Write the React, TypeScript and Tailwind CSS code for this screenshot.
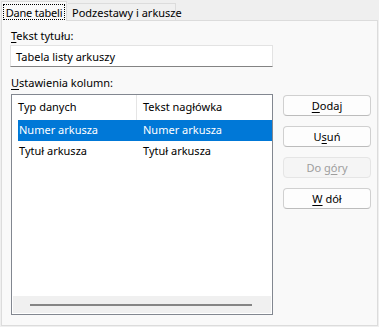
import React from "react";

function U({ children }: { children: React.ReactNode }) {
  return <span className="underline underline-offset-[2px] decoration-[1px]">{children}</span>;
}

function Btn({ children, disabled }: { children: React.ReactNode; disabled?: boolean }) {
  return (
    <div
      className={
        "h-[21px] w-[88px] rounded-[4px] border flex items-center justify-center leading-none whitespace-pre " +
        (disabled
          ? "border-[#e5e5e5] bg-[#f5f5f5] text-[#9d9d9d]"
          : "border-[#d0d0d0] border-b-[#bcbcbc] bg-[#fdfdfd] text-black")
      }
    >
      <span>{children}</span>
    </div>
  );
}

export default function App() {
  return (
    <div
      className="w-[379px] h-[327px] bg-[#efefef] overflow-hidden text-black text-[11px]"
      style={{ fontFamily: '"Noto Sans", "Segoe UI", sans-serif' }}
    >
      {/* tab strip */}
      <div className="flex items-end h-[20px] pl-[1px]">
        <div className="relative z-10 h-[20px] w-[66px] mb-[-1px] border border-b-0 border-[#dcdcdc] bg-[#f9f9f9] flex items-start pt-[2px] pl-[1px]">
          <div className="h-[16px] w-[62px] border border-dotted border-black flex items-center justify-center leading-none whitespace-nowrap tracking-[-0.2px]">
            Dane tabeli
          </div>
        </div>
        <div className="h-[17px] w-[108px] ml-[1px] border border-b-0 border-l-0 border-[#dcdcdc] bg-[#f0f0f0] flex items-center pl-[4px] leading-none whitespace-nowrap">
          Podzestawy i arkusze
        </div>
      </div>

      {/* panel */}
      <div className="ml-[1px] w-[377px] h-[306px] border border-[#dcdcdc] bg-[#f9f9f9] pl-[8px] pt-[8px]">
        <div className="h-[14px] pl-[1px] leading-[14px]">
          <U>T</U>ekst tytułu:
        </div>
        <div className="mt-[2px] w-[263px] h-[22px] border border-[#e3e3e3] border-b-[#838383] bg-white flex items-center pl-[5px] leading-none">
          Tabela listy arkuszy
        </div>
        <div className="mt-[9px] h-[14px] pl-[1px] leading-[14px]">
          <U>U</U>stawienia kolumn:
        </div>
        <div className="mt-[4px] flex">
          <div className="ml-[1px] w-[262px] h-[221px] border border-[#828790] bg-white flex flex-col">
            <div className="flex h-[25px] items-center">
              <div className="w-[125px] h-full border-r border-[#e5e5e5] flex items-center pl-[6px]">Typ danych</div>
              <div className="pl-[6px]">Tekst nagłówka</div>
            </div>
            <div className="ml-[6px] h-[21px] bg-[#0078d7] text-white flex items-center">
              <div className="w-[125px] pl-[1px]">Numer arkusza</div>
              <div>Numer arkusza</div>
            </div>
            <div className="ml-[6px] h-[21px] flex items-center">
              <div className="w-[125px] pl-[1px]">Tytuł arkusza</div>
              <div>Tytuł arkusza</div>
            </div>
            <div className="flex-1" />
            <div className="h-[17px] mx-[1px] mb-[1px] bg-[#f0f0f0] flex items-center pl-[17px]">
              <div className="w-[222px] h-[2px] bg-[#858585]" />
            </div>
          </div>
          <div className="ml-[10px] mt-[1px] flex flex-col gap-[10px]">
            <Btn>
              <U>D</U>odaj
            </Btn>
            <Btn>
              U<U>s</U>uń
            </Btn>
            <Btn disabled>
              Do g<U>ó</U>ry
            </Btn>
            <Btn>
              <U>W</U>{" "}dół
            </Btn>
          </div>
        </div>
      </div>
    </div>
  );
}
